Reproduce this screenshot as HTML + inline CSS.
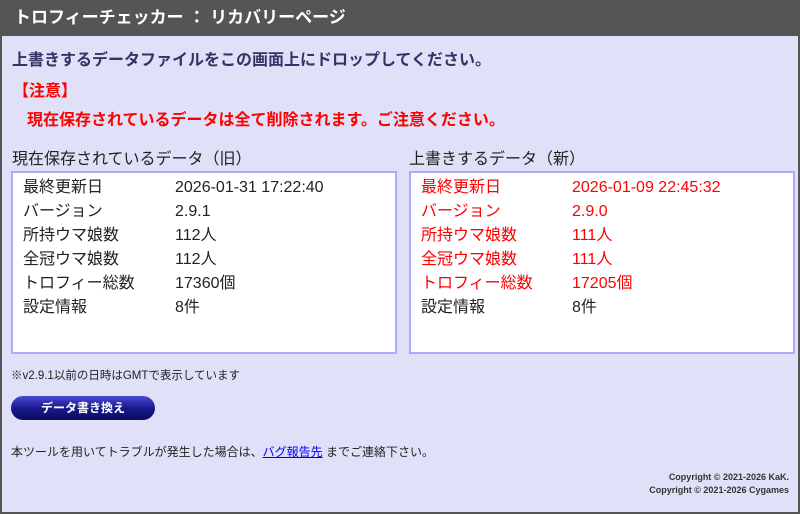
<!DOCTYPE html>
<html><head><meta charset="utf-8"><style>
*{margin:0;padding:0;box-sizing:border-box}
html,body{width:800px;height:514px;overflow:hidden}
body{background:#e0e0f8;font-family:"Liberation Sans","Noto Sans CJK JP",sans-serif;color:#222;position:relative;border:2px solid #555}
.abs{position:absolute;white-space:nowrap}
.hdr{left:0;top:0;width:796px;height:34px;background:#555;color:#fff;font-weight:bold;font-size:17px;line-height:31px;padding-left:12px}
.box{position:absolute;top:169px;width:386px;height:183px;background:#fff;border:2px solid #aaaaff}
.row{position:absolute;font-size:16px;line-height:24px}
.red{color:#f00}
.btn{left:9px;top:394px;width:144px;height:24px;border-radius:12px;background:linear-gradient(#4a4ad0,#1a1a90 50%,#0a0a60);color:#fff;font-weight:bold;font-size:12px;text-align:center;line-height:24px}
</style></head><body>
<div class="abs hdr">トロフィーチェッカー ： リカバリーページ</div>
<div class="abs" style="left:10px;top:44px;font-size:16px;font-weight:bold;color:#333366">上書きするデータファイルをこの画面上にドロップしてください。</div>
<div class="abs red" style="left:11px;top:75px;font-size:16px;font-weight:bold">【注意】</div>
<div class="abs red" style="left:25px;top:104px;font-size:16px;font-weight:bold">現在保存されているデータは全て削除されます。ご注意ください。</div>
<div class="abs" style="left:10px;top:143px;font-size:16px">現在保存されているデータ（旧）</div>
<div class="abs" style="left:407px;top:143px;font-size:16px">上書きするデータ（新）</div>
<div class="box" style="left:9px">
<div class="row" style="left:10px;top:3px">最終更新日<br>バージョン<br>所持ウマ娘数<br>全冠ウマ娘数<br>トロフィー総数<br>設定情報</div>
<div class="row" style="left:162px;top:3px">2026-01-31 17:22:40<br>2.9.1<br>112人<br>112人<br>17360個<br>8件</div>
</div>
<div class="box" style="left:407px">
<div class="row" style="left:10px;top:3px"><span class="red">最終更新日<br>バージョン<br>所持ウマ娘数<br>全冠ウマ娘数<br>トロフィー総数</span><br>設定情報</div>
<div class="row" style="left:161px;top:3px"><span class="red">2026-01-09 22:45:32<br>2.9.0<br>111人<br>111人<br>17205個</span><br>8件</div>
</div>
<div class="abs" style="left:9px;top:365px;font-size:11.5px">※v2.9.1以前の日時はGMTで表示しています</div>
<div class="abs btn">データ書き換え</div>
<div class="abs" style="left:9px;top:441px;font-size:12px">本ツールを用いてトラブルが発生した場合は、<span style="color:#00f;text-decoration:underline">バグ報告先</span> までご連絡下さい。</div>
<div class="abs" style="right:9px;top:469px;font-size:9px;font-weight:bold;color:#333;text-align:right;line-height:13px">Copyright © 2021-2026 KaK.<br>Copyright © 2021-2026 Cygames</div>
</body></html>
